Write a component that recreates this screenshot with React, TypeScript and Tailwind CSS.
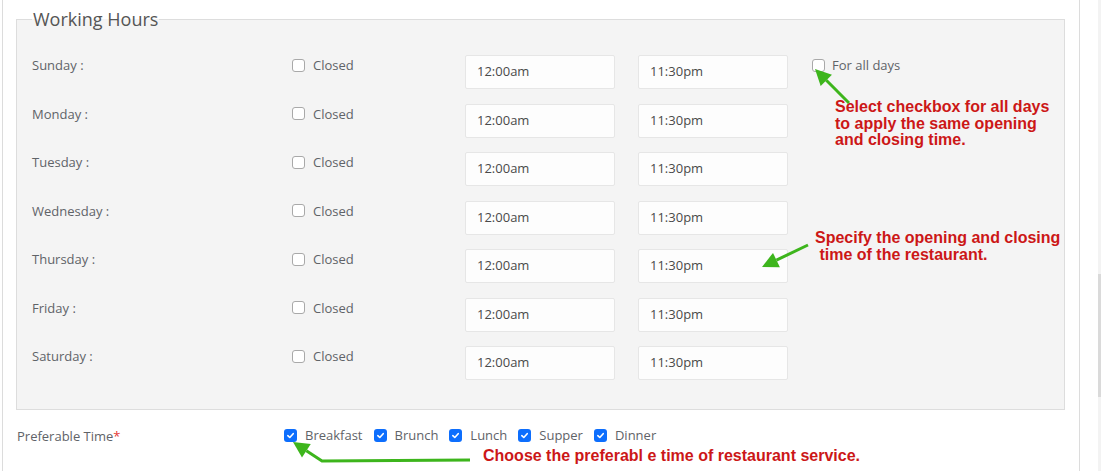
import React from 'react';

const days = ['Sunday', 'Monday', 'Tuesday', 'Wednesday', 'Thursday', 'Friday', 'Saturday'];
const meals = ['Breakfast', 'Brunch', 'Lunch', 'Supper', 'Dinner'];

const Box: React.FC<{ checked?: boolean }> = ({ checked }) =>
  checked ? (
    <span className="w-[13px] h-[13px] rounded-[3px] bg-[#0d6efd] flex items-center justify-center shrink-0">
      <svg width="9" height="9" viewBox="0 0 10 10">
        <path d="M2 5.2 L4.2 7.2 L8 3" fill="none" stroke="#fff" strokeWidth="1.8" strokeLinecap="round" strokeLinejoin="round" />
      </svg>
    </span>
  ) : (
    <span className="w-[13px] h-[13px] rounded-[3px] bg-white border border-[#a9a9a9] shrink-0" />
  );

// arrow polygon from tail to tip
function head(tx: number, ty: number, fx: number, fy: number, len = 16, w = 8) {
  const dx = tx - fx;
  const dy = ty - fy;
  const d = Math.hypot(dx, dy);
  const ux = dx / d;
  const uy = dy / d;
  const bx = tx - ux * len;
  const by = ty - uy * len;
  return {
    pts: `${tx},${ty} ${bx - uy * w},${by + ux * w} ${bx + uy * w},${by - ux * w}`,
    bx,
    by,
  };
}

const Arrows: React.FC = () => {
  const a1 = head(815, 69, 849, 103);
  const a2 = head(762, 267, 808, 245);
  const a3 = head(293, 442, 322, 461);
  const g = '#3db51c';
  return (
    <svg className="absolute left-0 top-0 pointer-events-none" width="1101" height="471">
      <line x1="849" y1="103" x2={a1.bx} y2={a1.by} stroke={g} strokeWidth="3" />
      <polygon points={a1.pts} fill={g} />
      <line x1="808" y1="245" x2={a2.bx} y2={a2.by} stroke={g} strokeWidth="3" />
      <polygon points={a2.pts} fill={g} />
      <polyline points={`470,460 322,461 ${a3.bx},${a3.by}`} fill="none" stroke={g} strokeWidth="3" />
      <polygon points={a3.pts} fill={g} />
    </svg>
  );
};

const note = "absolute font-['Liberation_Sans',Arial,sans-serif] font-bold text-[16px] leading-[16.5px] text-[#cc1717] whitespace-pre";

export default function App() {
  return (
    <div className="relative w-[1101px] h-[471px] overflow-hidden bg-white font-['Open_Sans',sans-serif] text-[13px] text-[#5f6368]">
      <div className="flex h-full">
        <div className="ml-[2px] w-[1078px] h-full border-x border-[#dcdcdc] pt-[6px]">
          <fieldset className="ml-[13px] mr-[14px] border border-[#dddddd] bg-[#f4f4f4] pl-[15px] pr-4 pt-[23px] pb-[14px]">
            <legend className="px-[1px] text-[18px] leading-[26px] text-[#555]">Working Hours</legend>
            {days.map((d) => (
              <div key={d} className="flex items-start h-[34px] mb-[14.5px]">
                <div className="w-[260px] leading-[20px]">{d} :</div>
                <label className="w-[173px] flex items-center gap-[8px] leading-[20px]">
                  <Box />
                  <span>Closed</span>
                </label>
                <div className="w-[150px] h-[34px] bg-[#fdfdfd] border border-[#e6e6e6] rounded-[2px] pl-[11px] flex items-center text-[#4a4a4a]">
                  12:00am
                </div>
                <div className="w-[150px] h-[34px] ml-[23px] bg-[#fdfdfd] border border-[#e6e6e6] rounded-[2px] pl-[11px] flex items-center text-[#4a4a4a]">
                  11:30pm
                </div>
                {d === 'Sunday' && (
                  <label className="ml-[24px] flex items-center gap-[7px] leading-[20px]">
                    <Box />
                    <span>For all days</span>
                  </label>
                )}
              </div>
            ))}
          </fieldset>
          <div className="flex items-center pl-[14px] mt-[15px]">
            <div className="w-[267px] leading-[20px] pt-[1px]">
              Preferable Time<span className="text-[#e53935]">*</span>
            </div>
            <div className="flex items-center">
              {meals.map((m) => (
                <label key={m} className="flex items-center gap-[8px] mr-[11px] leading-[20px]">
                  <Box checked />
                  <span>{m}</span>
                </label>
              ))}
            </div>
          </div>
        </div>
        <div className="ml-[18px] w-[3px] h-full bg-[#f3f3f3] flex flex-col">
          <div className="h-[274px]" />
          <div className="h-[123px] bg-[#dadada]" />
        </div>
      </div>

      <div className={`${note} left-[835px] top-[99px]`}>{'Select checkbox for all days\nto apply the same opening\nand closing time.'}</div>
      <div className={`${note} left-[815px] top-[230px]`}>{'Specify the opening and closing\n time of the restaurant.'}</div>
      <div className={`${note} left-[483px] top-[448px]`}>Choose the preferabl e time of restaurant service.</div>
      <Arrows />
    </div>
  );
}
